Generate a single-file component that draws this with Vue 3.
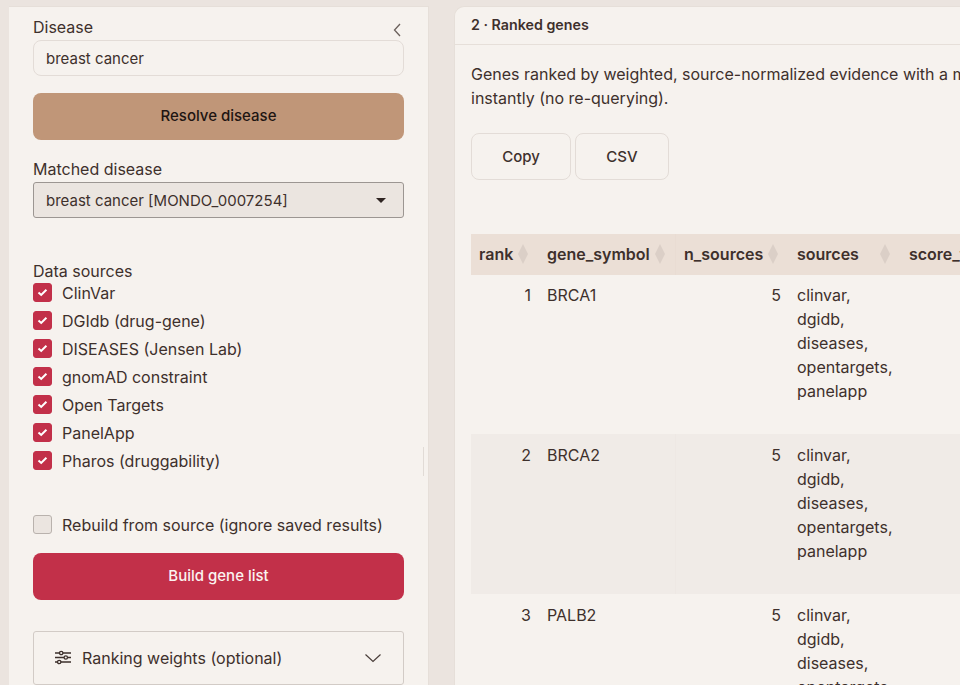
<script setup>
const sourcesList = [
  'ClinVar',
  'DGIdb (drug-gene)',
  'DISEASES (Jensen Lab)',
  'gnomAD constraint',
  'Open Targets',
  'PanelApp',
  'Pharos (druggability)',
]

const columns = [
  { key: 'rank', cls: 'col-rank' },
  { key: 'gene_symbol', cls: 'col-gene' },
  { key: 'n_sources', cls: 'col-n' },
  { key: 'sources', cls: 'col-sources' },
  { key: 'score_total', cls: 'col-score' },
]

const sourceNames = ['clinvar,', 'dgidb,', 'diseases,', 'opentargets,', 'panelapp']

const rows = [
  { rank: 1, gene: 'BRCA1', n: 5 },
  { rank: 2, gene: 'BRCA2', n: 5 },
  { rank: 3, gene: 'PALB2', n: 5 },
]
</script>

<template>
  <div class="page">
    <aside class="sidebar">
      <button class="collapse" aria-label="Collapse sidebar">
        <svg width="10" height="16" viewBox="0 0 10 16" fill="none">
          <path d="M8 2 L2.5 8 L8 14" stroke="#6b605b" stroke-width="1.3" />
        </svg>
      </button>

      <label class="label label-disease">Disease</label>
      <input class="text-input" value="breast cancer" />

      <button class="btn btn-resolve">Resolve disease</button>

      <label class="label label-matched">Matched disease</label>
      <div class="select">
        <span>breast cancer [MONDO_0007254]</span>
        <span class="caret"></span>
      </div>

      <div class="label label-sources">Data sources</div>
      <div class="checks">
        <div v-for="s in sourcesList" :key="s" class="check-row">
          <span class="box checked">
            <svg width="11" height="9" viewBox="0 0 11 9" fill="none">
              <path d="M1.5 4.6 L4.2 7 L9.4 1.8" stroke="#fff" stroke-width="2" />
            </svg>
          </span>
          <span>{{ s }}</span>
        </div>
      </div>

      <div class="check-row rebuild">
        <span class="box"></span>
        <span>Rebuild from source (ignore saved results)</span>
      </div>

      <button class="btn btn-build">Build gene list</button>

      <div class="accordion">
        <svg class="sliders" width="16" height="15" viewBox="0 0 16 15" fill="none" stroke="#3d302c" stroke-width="1.3">
          <path d="M0 3 H4.5 M8 3 H16 M0 7.5 H9 M12.5 7.5 H16 M0 12 H2.5 M6 12 H16" />
          <circle cx="6.2" cy="3" r="1.7" />
          <circle cx="10.8" cy="7.5" r="1.7" />
          <circle cx="4.2" cy="12" r="1.7" />
        </svg>
        <span class="accordion-title">Ranking weights (optional)</span>
        <svg width="18" height="10" viewBox="0 0 18 10" fill="none">
          <path d="M1.5 1.5 L9 8.5 L16.5 1.5" stroke="#4a3e3a" stroke-width="1.2" />
        </svg>
      </div>

      <span class="resize-handle"></span>
    </aside>

    <main class="panel">
      <header class="panel-head">2 · Ranked genes</header>
      <div class="panel-body">
        <p class="intro">
          Genes ranked by weighted, source-normalized evidence with a multi-source bonus. Adjust the weights to re-rank<br />
          instantly (no re-querying).
        </p>

        <div class="actions">
          <button class="btn-out btn-copy">Copy</button>
          <button class="btn-out btn-csv">CSV</button>
        </div>

        <table class="genes">
          <thead>
            <tr>
              <th v-for="c in columns" :key="c.key" :class="c.cls">
                <span class="th-inner">
                  <span>{{ c.key }}</span>
                  <span class="sort"><i class="up"></i><i class="down"></i></span>
                </span>
              </th>
            </tr>
          </thead>
          <tbody>
            <tr v-for="r in rows" :key="r.rank">
              <td class="num">{{ r.rank }}</td>
              <td class="gene">{{ r.gene }}</td>
              <td class="num">{{ r.n }}</td>
              <td>
                <div v-for="n in sourceNames" :key="n">{{ n }}</div>
              </td>
              <td></td>
            </tr>
          </tbody>
        </table>
      </div>
    </main>
  </div>
</template>

<style>
html,
body {
  margin: 0;
  background: #ebe4df;
}
</style>

<style scoped>
.page {
  height: 685px;
  width: 960px;
  overflow: hidden;
  display: grid;
  grid-template-columns: 420px 506px;
  column-gap: 25px;
  padding: 6px 0 0 9px;
  box-sizing: border-box;
  background: #ebe4df;
  font-family: Inter, "Liberation Sans", sans-serif;
  font-size: 16px;
  color: #3e302c;
}
.sidebar {
  position: relative;
  background: #f6f2ee;
  border: 1px solid #e6dfd9;
  border-width: 1px 1px 0 0;
  padding: 0 24px;
  height: 700px;
  box-sizing: border-box;
  display: flex;
  flex-direction: column;
}
.collapse {
  position: absolute;
  top: 15px;
  right: 26px;
  padding: 0;
  border: 0;
  background: none;
  line-height: 0;
}
.label {
  font-size: 16px;
  line-height: 20px;
}
.label-disease {
  margin-top: 10px;
  margin-bottom: 3px;
}
.text-input {
  height: 36px;
  box-sizing: border-box;
  border: 1px solid #e3dcd7;
  border-radius: 8px;
  background: #f6f2ee;
  padding: 0 12px;
  font: inherit;
  font-size: 15px;
  color: inherit;
  outline: none;
}
.btn {
  height: 47px;
  padding: 0 0 2px;
  border: 0;
  border-radius: 8px;
  font-family: inherit;
  font-size: 15px;
  font-weight: 550;
}
.btn-resolve {
  margin-top: 17px;
  background: #c09678;
  color: #1e1512;
}
.label-matched {
  margin-top: 19px;
  margin-bottom: 3px;
}
.select {
  height: 36px;
  box-sizing: border-box;
  display: flex;
  align-items: center;
  justify-content: space-between;
  padding: 0 17px 0 12px;
  background: #ebe5e0;
  border: 1px solid #9c9692;
  border-radius: 3px;
  font-size: 15px;
}
.caret {
  width: 0;
  height: 0;
  border-left: 5px solid transparent;
  border-right: 5px solid transparent;
  border-top: 5px solid #2f2522;
}
.label-sources {
  margin-top: 43px;
  margin-bottom: 2px;
}
.checks {
  display: flex;
  flex-direction: column;
  gap: 9px;
}
.check-row {
  display: flex;
  align-items: center;
  gap: 10px;
  height: 19px;
}
.box {
  width: 19px;
  height: 19px;
  box-sizing: border-box;
  flex: none;
  display: flex;
  align-items: center;
  justify-content: center;
  border: 1px solid #b9b2ad;
  border-radius: 3px;
  background: #ebe5e0;
}
.box.checked {
  background: #c23049;
  border-color: #c23049;
}
.rebuild {
  margin-top: 45px;
}
.btn-build {
  margin-top: 18.5px;
  background: #c23049;
  color: #fbf3f1;
}
.accordion {
  margin-top: 31px;
  height: 54px;
  box-sizing: border-box;
  flex: none;
  display: flex;
  align-items: center;
  padding: 0 21px;
  border: 1px solid #d2cbc6;
  border-radius: 3px;
}
.sliders {
  flex: none;
}
.accordion-title {
  flex: 1;
  margin-left: 11px;
}
.resize-handle {
  position: absolute;
  right: 4px;
  top: 440px;
  width: 1px;
  height: 29px;
  background: #e1dbd6;
}
.panel {
  background: #f6f2ee;
  border: 1px solid #e6dfd9;
  border-width: 1px 0 0 1px;
  border-top-left-radius: 10px;
  height: 700px;
  overflow: hidden;
}
.panel-head {
  height: 38px;
  box-sizing: border-box;
  padding: 0 16px 2px;
  display: flex;
  align-items: center;
  font-size: 14.25px;
  font-weight: 600;
  border-bottom: 1px solid #e6dfd9;
}
.panel-body {
  padding: 0 16px;
}
.intro {
  margin: 17px 0 0;
  line-height: 24px;
  white-space: nowrap;
}
.actions {
  margin-top: 23px;
  display: flex;
  gap: 4px;
}
.btn-out {
  height: 47px;
  padding: 0;
  box-sizing: border-box;
  border: 1px solid #e3dcd7;
  border-radius: 8px;
  background: #f6f2ee;
  color: #3e302c;
  font-family: inherit;
  font-size: 15px;
  font-weight: 500;
}
.btn-copy {
  width: 100px;
}
.btn-csv {
  width: 94px;
}
.genes {
  margin-top: 54px;
  border-collapse: collapse;
  table-layout: fixed;
  width: 604px;
  line-height: 24px;
}
.genes th {
  height: 41px;
  box-sizing: border-box;
  padding: 0 11px 1px 8px;
  background: #ebdfd6;
  text-align: left;
  font-size: 16px;
  font-weight: 600;
  white-space: nowrap;
  overflow: hidden;
}
.col-rank {
  width: 68px;
}
.col-gene {
  width: 137px;
}
.col-n {
  width: 113px;
}
.col-sources {
  width: 112px;
}
.col-score {
  width: 174px;
}
.genes th.col-gene,
.genes tbody tr:nth-child(even) td.gene {
  box-shadow: inset -1px 0 0 rgba(60, 40, 30, 0.012);
}
.th-inner {
  display: flex;
  align-items: center;
  justify-content: space-between;
}
.sort {
  display: flex;
  flex-direction: column;
  flex: none;
  margin-left: 2px;
}
.sort i {
  display: block;
  width: 0;
  height: 0;
  border-left: 5.5px solid transparent;
  border-right: 5.5px solid transparent;
}
.sort .up {
  border-bottom: 10px solid #dbcfc7;
}
.sort .down {
  border-top: 10px solid #dbcfc7;
}
.genes td {
  height: 160px;
  box-sizing: border-box;
  padding: 9px 8px 0;
  vertical-align: top;
}
.genes tbody tr:first-child td {
  height: 159px;
  padding-top: 8px;
}
.genes .num {
  text-align: right;
}
.genes tbody tr:nth-child(even) td {
  background: #f0ebe7;
}
</style>
